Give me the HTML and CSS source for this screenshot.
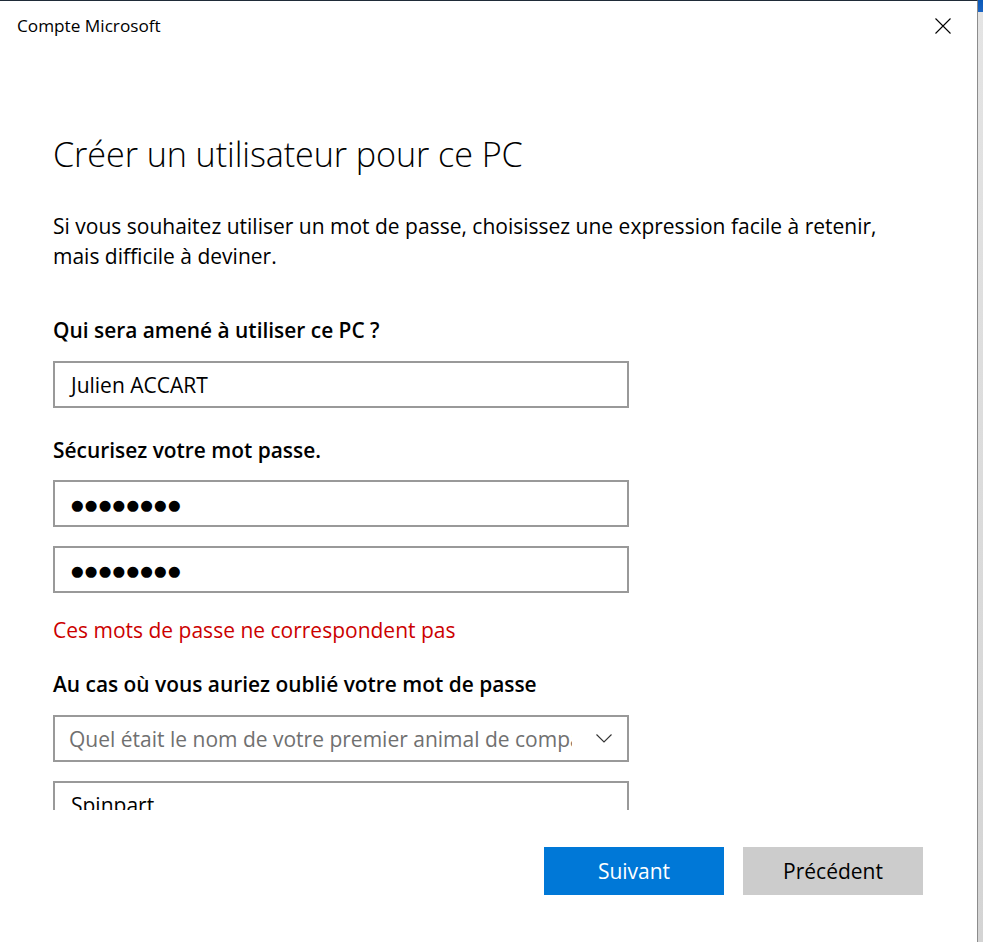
FILE: index.html
```html
<!DOCTYPE html>
<html lang="fr">
<head>
<meta charset="utf-8">
<title>Compte Microsoft</title>
<link rel="stylesheet" href="styles.css">
</head>
<body>
<div class="frame">
  <div class="window">
    <div class="titlebar">
      <span class="title">Compte Microsoft</span>
      <button class="close" aria-label="Fermer">
        <svg width="16" height="16" viewBox="0 0 16 16"><path d="M0.5 0.5 L15.5 15.5 M15.5 0.5 L0.5 15.5" stroke="#000" stroke-width="1.1" fill="none"/></svg>
      </button>
    </div>
    <div class="scroll">
      <h1 class="heading">Créer un utilisateur pour ce PC</h1>
      <p class="intro">Si vous souhaitez utiliser un mot de passe, choisissez une expression facile à retenir, mais difficile à deviner.</p>
      <div class="label first">Qui sera amené à utiliser ce PC ?</div>
      <div class="field name"><span class="value">Julien ACCART</span></div>
      <div class="label">Sécurisez votre mot passe.</div>
      <div class="field"><span class="dots">●●●●●●●●</span></div>
      <div class="field gap"><span class="dots">●●●●●●●●</span></div>
      <div class="error">Ces mots de passe ne correspondent pas</div>
      <div class="label recover">Au cas où vous auriez oublié votre mot de passe</div>
      <div class="field select">
        <span class="placeholder">Quel était le nom de votre premier animal de compagnie ?</span>
        <svg class="chev" width="16" height="9" viewBox="0 0 16 9"><path d="M0.5 0.5 L8 8 L15.5 0.5" stroke="#333" stroke-width="1.1" fill="none"/></svg>
      </div>
      <div class="field gap"><span class="value">Spinpart</span></div>
    </div>
    <div class="footer">
      <button class="btn primary">Suivant</button>
      <button class="btn secondary">Précédent</button>
    </div>
  </div>
  <div class="side"></div>
</div>
</body>
</html>
```

FILE: styles.css
```css
* { box-sizing: border-box; }
html, body { margin: 0; padding: 0; }
body {
  font-family: "Open Sans", "Noto Sans", "Liberation Sans", sans-serif;
  color: #000;
  background: #fff;
}
.frame {
  display: flex;
  height: 942px;
  overflow: hidden;
}
.window {
  width: 978px;
  flex: none;
  border-top: 1px solid #1f2b38;
  border-right: 1px solid #8c8c8c;
  background: #fff;
  display: flex;
  flex-direction: column;
}
.side {
  flex: 1;
  background: linear-gradient(#0a59b8 0, #1a64c4 12px, #e4e4e4 12px, #d4d4d4 100%);
}
.titlebar {
  height: 49px;
  display: flex;
  align-items: center;
  justify-content: space-between;
  padding: 0 26px 0 17px;
}
.title {
  font-size: 17.2px;
  color: #000;
}
.close {
  border: 0;
  background: transparent;
  padding: 0;
  width: 16px;
  height: 16px;
  display: flex;
}
.scroll {
  height: 760px;
  overflow: hidden;
  padding: 0 0 0 53px;
}
.heading {
  margin: 84px 0 0 0;
  font-weight: 300;
  font-size: 34.2px;
  line-height: 40px;
  color: #000;
  letter-spacing: -0.1px;
}
.intro {
  margin: 37px 0 0 0;
  font-size: 21px;
  line-height: 30px;
  width: 860px;
}
.label {
  font-weight: 600;
  font-size: 20.9px;
  line-height: 26px;
  margin: 29px 0 0 0;
}
.label.first { margin-top: 46px; }
.label.recover { margin-top: 28px; }
.field {
  width: 576px;
  height: 47px;
  border: 2px solid #999;
  margin-top: 17px;
  display: flex;
  align-items: center;
  padding: 0 14px 0 16px;
  font-size: 21px;
  overflow: hidden;
  white-space: nowrap;
}
.field.name { margin-top: 18px; }
.field.gap { margin-top: 19px; }
.value { line-height: 26px; }
.dots {
  font-family: "DejaVu Sans", sans-serif;
  font-size: 14.5px;
  letter-spacing: 1.2px;
  padding-top: 2px;
}
.error {
  color: #cc0000;
  font-size: 21px;
  line-height: 26px;
  margin-top: 24px;
}
.select {
  margin-top: 18px;
  justify-content: space-between;
  padding-left: 14px;
  padding-right: 15px;
}
.placeholder {
  color: #707070;
  width: 503px;
  overflow: hidden;
  white-space: nowrap;
}
.chev { flex: none; }
.footer {
  flex: 1;
  display: flex;
  justify-content: flex-end;
  align-items: flex-start;
  gap: 19px;
  padding: 37px 54px 0 0;
}
.btn {
  width: 180px;
  height: 48px;
  border: 0;
  font-family: inherit;
  font-size: 21px;
}
.primary { background: #0078d7; color: #fff; }
.secondary { background: #cccccc; color: #000; }
```
